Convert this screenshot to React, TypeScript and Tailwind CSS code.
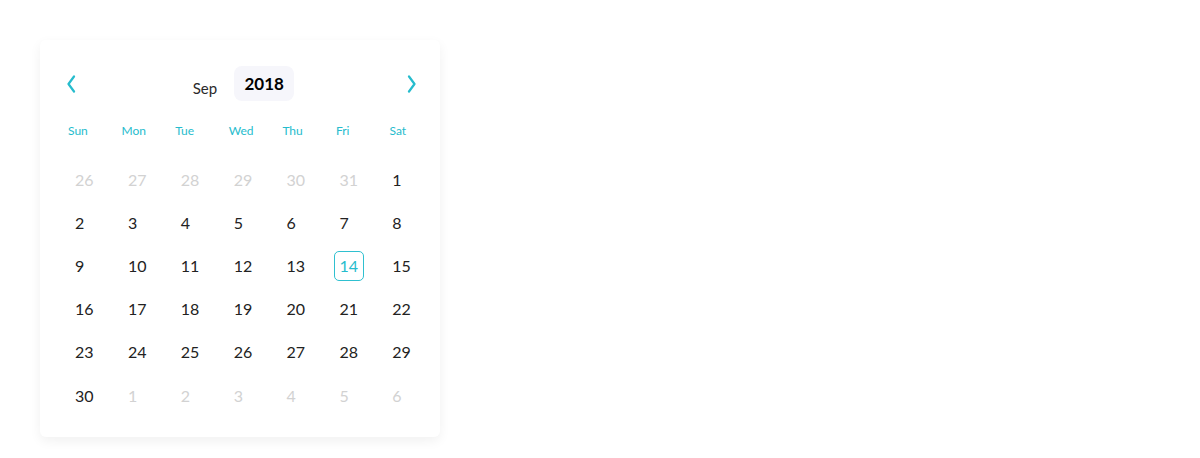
import React from 'react';

const weekdays = ['Sun', 'Mon', 'Tue', 'Wed', 'Thu', 'Fri', 'Sat'];

type Day = { n: number; muted?: boolean; today?: boolean };

const buildDays = (): Day[] => {
  const days: Day[] = [];
  for (let n = 26; n <= 31; n++) days.push({ n, muted: true });
  for (let n = 1; n <= 30; n++) days.push({ n, today: n === 14 });
  for (let n = 1; n <= 6; n++) days.push({ n, muted: true });
  return days;
};

const Chevron = ({ dir }: { dir: 'left' | 'right' }) => (
  <svg width="10" height="18" viewBox="0 0 10 18" fill="none" className="block">
    <path
      d={dir === 'left' ? 'M8 1.5 L2.5 9 L8 16.5' : 'M2 1.5 L7.5 9 L2 16.5'}
      stroke="#26bccd"
      strokeWidth="2.2"
      strokeLinecap="round"
      strokeLinejoin="round"
    />
  </svg>
);

const App = () => {
  const days = buildDays();

  return (
    <div className="min-h-[458px] w-[1200px] bg-white pl-[40px] pt-[40px] font-['Lato','Open_Sans',sans-serif]">
      <div className="w-[400px] rounded-[6px] bg-white pb-[20px] pt-[26px] shadow-[0_4px_12px_rgba(0,0,0,0.06)]">
        {/* Month / year header */}
        <div className="flex h-[35px] items-center justify-between pl-[26px] pr-[23px]">
          <button className="flex h-[20px] w-[12px] items-center justify-start">
            <Chevron dir="left" />
          </button>
          <div className="ml-[4px] flex items-center">
            <span className="mr-[17px] mt-[9px] text-[15px] text-[#2a2a2a]">Sep</span>
            <span className="flex h-[35px] w-[60px] items-center justify-center rounded-[8px] bg-[#f6f6fb] text-[17px] font-bold text-black">
              2018
            </span>
          </div>
          <button className="flex h-[20px] w-[12px] items-center justify-end">
            <Chevron dir="right" />
          </button>
        </div>

        {/* Weekday labels */}
        <div className="mt-[22px] grid grid-cols-[repeat(7,53.6px)] pl-[28px]">
          {weekdays.map((d) => (
            <span key={d} className="text-[12px] leading-[16px] text-[#26bccd]">
              {d}
            </span>
          ))}
        </div>

        {/* Days */}
        <div className="mt-[19px] grid grid-cols-[repeat(7,52.9px)] pl-[30px]">
          {days.map((d, i) => (
            <div key={i} className="flex h-[43.2px] items-center">
              <span
                className={
                  'inline-flex h-[30px] min-w-[30px] items-center rounded-[5px] border px-[4px] text-[16px] ' +
                  (d.today
                    ? 'border-[#2fc0d0] text-[#26bccd]'
                    : d.muted
                    ? 'border-transparent text-[#d2d2d2]'
                    : 'border-transparent text-[#222222]')
                }
              >
                {d.n}
              </span>
            </div>
          ))}
        </div>
      </div>
    </div>
  );
};

export default App;
